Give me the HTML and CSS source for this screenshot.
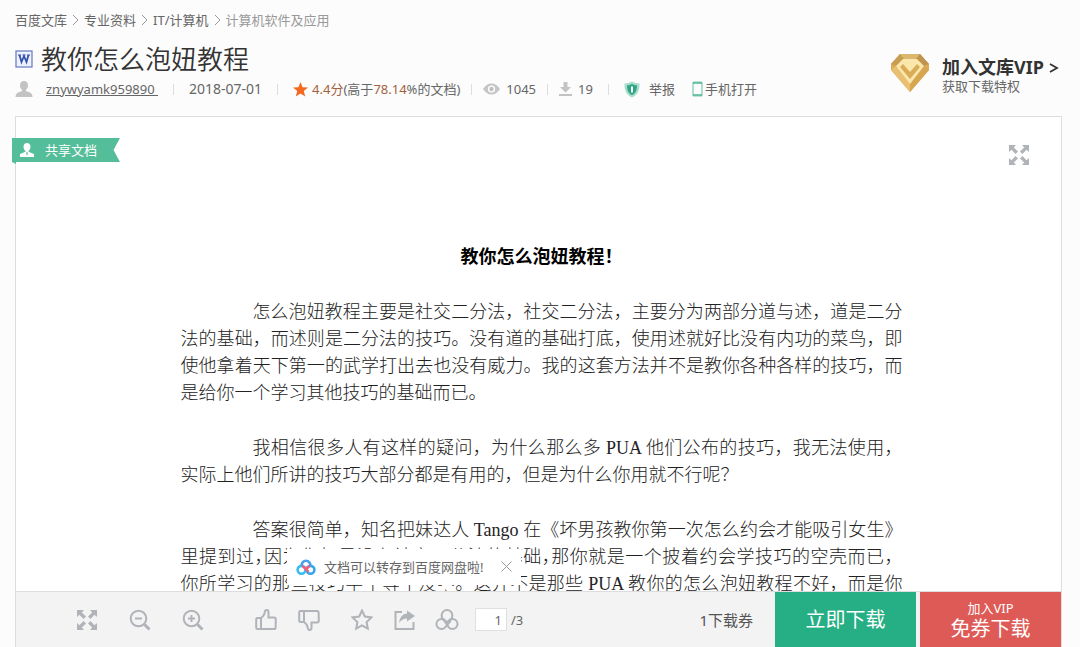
FILE: index.html
```html
<!DOCTYPE html>
<html lang="zh-CN">
<head>
    <meta charset="UTF-8">
    <meta name="viewport" content="width=device-width, initial-scale=1.0">
    <title>教你怎么泡妞教程</title>
    <link rel="stylesheet" href="styles.css">
</head>
<body>

<svg class="sprite" aria-hidden="true">
    <symbol id="expand" viewBox="0 0 22 22">
        <path d="M1 1h7L5.800 3.400 10 7.600 7.600 10 3.400 5.800 1 8zM21 1v7l-2.400-2.200L14.400 10 12 7.600l4.200-4.200L14 1zM1 21v-7l2.400 2.200L7.600 12l2.400 2.400-4.200 4.200L8 21zM21 21h-7l2.200-2.400-4.200-4.200 2.400-2.400 4.200 4.200L21 14z" fill="currentColor"/>
    </symbol>
</svg>

<header class="header">
    <nav class="crumbs">
        <a href="#">百度文库</a>
        <svg class="arrow" viewBox="0 0 7 12"><path d="M1 1l5 5-5 5"/></svg>
        <a href="#">专业资料</a>
        <svg class="arrow" viewBox="0 0 7 12"><path d="M1 1l5 5-5 5"/></svg>
        <a href="#">IT/计算机</a>
        <svg class="arrow" viewBox="0 0 7 12"><path d="M1 1l5 5-5 5"/></svg>
        <a href="#" class="current">计算机软件及应用</a>
    </nav>

    <div class="info">
        <div class="info-left">
            <div class="title">
                <svg width="18" height="18" viewBox="0 0 18 18">
                    <rect x="1" y="1" width="16" height="16" fill="#eef2fc" stroke="#6379bd" stroke-width="1.200"/>
                    <path d="M3 5h3M7.500 5h3M12 5h3" stroke="#3451ae" stroke-width="1.200"/>
                    <path d="M4.500 5l2 7L9 6l2.500 6 2-7" fill="none" stroke="#3451ae" stroke-width="1.800"/>
                </svg>
                <h1>教你怎么泡妞教程</h1>
            </div>
            <div class="meta">
                <svg class="user" width="18" height="16" viewBox="0 0 18 16">
                    <path d="M9 0c2.500 0 4 1.800 4 4.300 0 2-.8 3.700-2 4.500v1.400c3 .7 6.500 1.600 6.500 5.800H.5c0-4.200 3.500-5.100 6.500-5.800V8.800C5.800 8 5 6.300 5 4.300 5 1.800 6.500 0 9 0z" fill="#c3c3c3"/>
                </svg>
                <a href="#" class="author">znywyamk959890&nbsp;</a>
                <span class="sep"></span>
                <span class="num">2018-07-01</span>
                <span class="sep"></span>
                <svg class="star" width="15" height="15" viewBox="0 0 16 16">
                    <path d="M8 0l2.200 5.500 5.800.4-4.500 3.800L13 15.500 8 12.300 3 15.500l1.500-5.800L0 5.900l5.800-.4z" fill="#f4681f"/>
                </svg>
                <span><b>4.4分</b>(高于<b>78.14</b>%的文档)</span>
                <span class="sep small"></span>
                <svg class="eye" width="17" height="12" viewBox="0 0 17 12">
                    <path d="M0 6c2-3.500 5-5.500 8.500-5.500S15 2.500 17 6c-2 3.500-5 5.500-8.500 5.500S2 9.500 0 6z" fill="#c6c6c6"/>
                    <circle cx="8.500" cy="6" r="3.600" fill="#fff"/>
                    <circle cx="8.500" cy="6" r="2.200" fill="#c0c0c0"/>
                </svg>
                <span>1045</span>
                <span class="sep small"></span>
                <svg class="down" width="13" height="14" viewBox="0 0 13 14">
                    <path d="M4.500 0h4v5H12l-5.500 5.500L1 5h3.500zM0 12h13v2H0z" fill="#c3c3c3"/>
                </svg>
                <span>19</span>
                <span class="sep"></span>
                <a href="#" class="report">
                    <svg width="16" height="17" viewBox="0 0 16 17">
                        <path d="M8 .5c2.500 1.300 4.700 1.900 7.500 2 .3 7-2 11.500-7.500 14C2.500 14 .2 9.500.5 2.500 3.300 2.400 5.500 1.800 8 .5z" fill="#a9dccb"/>
                        <path d="M8 3c1.700.9 3.300 1.300 5 1.400 0 5-1.500 7.800-5 9.600-3.500-1.800-5-4.600-5-9.600 1.700-.1 3.300-.5 5-1.400z" fill="#2fa683"/>
                        <path d="M8 5.500v6" stroke="#fff" stroke-width="2"/>
                    </svg>
                    举报
                </a>
                <a href="#" class="phone">
                    <svg width="11" height="16" viewBox="0 0 11 16">
                        <rect x="1" y="1" width="9" height="14" rx="1" fill="none" stroke="#7dc9ae" stroke-width="1.200"/>
                        <path d="M1 2h9M1 14h9" stroke="#4fb592" stroke-width="1.600"/>
                    </svg>
                    手机打开
                </a>
            </div>
        </div>

        <a href="#" class="vip">
            <svg width="40" height="40" viewBox="0 0 40 40">
                <path d="M10 1h20l9 10v6L20 39 1 17v-6z" fill="#d9ab56"/>
                <path d="M10 1h20l-4 5H14z" fill="#dcb86c"/>
                <path d="M1 11l9-10 4 5-7 7z" fill="#c79d52"/>
                <path d="M39 11L30 1l-4 5 7 7z" fill="#c0944c"/>
                <path d="M1 17l5-4 14 18v8z" fill="#e9c071"/>
                <path d="M39 17l-5-4-14 18v8z" fill="#d7a650"/>
                <path d="M13 6h14l7 7-14 18L6 13z" fill="#fbe6ab"/>
                <path d="M10 14l3-3 7 8 7-8 3 3-10 12z" fill="#d9ad58"/>
            </svg>
            <span class="vip-text">
                <strong>加入文库VIP<svg width="10" height="12" viewBox="0 0 10 12"><path d="M1 2l7 4-7 4" fill="none" stroke="#333" stroke-width="1.800"/></svg></strong>
                <span>获取下载特权</span>
            </span>
        </a>
    </div>
</header>

<main class="reader">
    <div class="ribbon">
        <svg width="14" height="14" viewBox="0 0 14 14">
            <path d="M7 0c2.200 0 3.500 1.500 3.500 3.700C10.500 5.700 9.600 7 8.600 7.800v.9L14 11v3H0v-3l5.400-2.300v-.9C4.400 7 3.500 5.700 3.500 3.700 3.500 1.500 4.800 0 7 0z" fill="#fff"/>
            <path d="M6 9.500h2L7 13z" fill="#54bd99"/>
        </svg>
        共享文档
    </div>
    <button class="full" aria-label="全屏"><svg width="22" height="22"><use href="#expand"/></svg></button>

    <article class="doc">
        <h2>教你怎么泡妞教程！</h2>
        <p>怎么泡妞教程主要是社交二分法，社交二分法，主要分为两部分道与述，道是二分法的基础，而述则是二分法的技巧。没有道的基础打底，使用述就好比没有内功的菜鸟，即使他拿着天下第一的武学打出去也没有威力。我的这套方法并不是教你各种各样的技巧，而是给你一个学习其他技巧的基础而已。</p>
        <p>我相信很多人有这样的疑问，为什么那么多 PUA 他们公布的技巧，我无法使用，实际上他们所讲的技巧大部分都是有用的，但是为什么你用就不行呢？</p>
        <p class="last">答案很简单，知名把妹达人 Tango 在《坏男孩教你第一次怎么约会才能吸引女生》里提到过<i>，</i>因为你如果没有社交二分法的基础<i>，</i>那你就是一个披着约会学技巧的空壳而已，<br>你所学习的那些技巧学了等于没学。这并不是那些 PUA 教你的怎么泡妞教程不好，而是你</p>
    </article>
</main>

<footer class="toolbar">
    <div class="tools">
        <button aria-label="全屏"><svg width="22" height="22"><use href="#expand"/></svg></button>
        <button class="wide" aria-label="缩小">
            <svg class="line" width="22" height="22" viewBox="0 0 22 22"><circle cx="9.500" cy="9.500" r="7.800"/><path d="M6 9.500h7"/><path class="thick" d="M15.500 15.500l5 5"/></svg>
        </button>
        <button class="wide" aria-label="放大">
            <svg class="line" width="22" height="22" viewBox="0 0 22 22"><circle cx="9.500" cy="9.500" r="7.800"/><path d="M6 9.500h7M9.500 6v7"/><path class="thick" d="M15.500 15.500l5 5"/></svg>
        </button>
        <button class="group" aria-label="赞">
            <svg class="line" width="22" height="22" viewBox="0 0 22 22"><path d="M6 9H2.500Q1.200 9 1.200 10.300v8.400Q1.200 20 2.500 20H19q1.600 0 1.600-1.600l.2-8Q20.800 8.500 19 8.500h-5.500V3.200Q13.500 1 11.600 1 10 1 9.800 3 9.500 6.500 6 9zM6 9v11"/></svg>
        </button>
        <button class="near" aria-label="踩">
            <svg class="line" width="22" height="22" viewBox="0 0 22 22"><path d="M6 13H2.500Q1.200 13 1.200 11.700V3.300Q1.200 2 2.500 2H19q1.600 0 1.600 1.600l.2 8q0 1.900-1.800 1.900h-5.500v5.300q0 2.200-1.900 2.200-1.600 0-1.800-2Q9.500 15.500 6 13zM6 13V2"/></svg>
        </button>
        <button class="wide" aria-label="收藏">
            <svg class="line" width="22" height="22" viewBox="0 0 22 22"><path d="M11 1.500l2.800 6 6.700.9-4.900 4.600 1.200 6.700-5.800-3.300-5.800 3.300 1.200-6.700L1.500 8.400l6.700-.9z"/></svg>
        </button>
        <button class="near" aria-label="分享">
            <svg class="line" width="22" height="22" viewBox="0 0 22 22"><path d="M8 3H1.500v17h18v-7"/><path d="M13 1.500L21 7l-8 5.500V9.500q-5 0-8 4.500 1-9 8-9.500z" fill="#b0b3b8" stroke="none"/></svg>
        </button>
        <div class="netdisk">
            <button aria-label="转存到网盘">
                <svg class="line" width="24" height="22" viewBox="0 0 24 22"><path d="M8.200 10.300A5.400 5.400 0 1 1 15.800 10.300L12 13.500z"/><path d="M12 13.500l-1.800-1.800A5 5 0 1 0 10.200 18.300L15.800 11.700"/><path d="M12 13.500l1.800-1.800A5 5 0 1 1 13.800 18.300L8.200 10.300"/></svg>
            </button>
            <div class="tip">
                <svg width="20" height="16" viewBox="0 0 20 16" fill="none" stroke-width="2.600">
                    <circle cx="5.500" cy="10.800" r="3.900" stroke="#35bdf2"/>
                    <circle cx="14.500" cy="10.800" r="3.900" stroke="#35a4ee"/>
                    <path d="M5.800 7a4.300 4.300 0 1 1 8.400 0" stroke="#4aa0ec"/>
                    <path d="M6.500 7l3.500 3 3.500-3M10 10l2.500 3" stroke="#f0607c"/>
                </svg>
                <span>文档可以转存到百度网盘啦!</span>
                <button aria-label="关闭"><svg width="11" height="11" viewBox="0 0 11 11"><path d="M.5.5l10 10M10.500.5l-10 10" stroke="#999"/></svg></button>
            </div>
        </div>
        <label class="pages"><input type="text" value="1" aria-label="页码"><span>/3</span></label>
    </div>
    <span class="ticket">1下载券</span>
    <button class="btn green">立即下载</button>
    <button class="btn red"><small>加入VIP</small>免券下载</button>
</footer>

</body>
</html>
```
FILE: styles.css
```css
* {
    box-sizing: border-box;
}
body {
    display: flex;
    flex-direction: column;
    height: 100vh;
    margin: 0;
    padding: 0 18px 0 15px;
    overflow: hidden;
    background: #fcfcfc;
    color: #666;
    font-family: "Noto Sans", "Noto Sans CJK SC", sans-serif;
    font-size: 13px;
    line-height: 20px;
}
a {
    color: inherit;
    text-decoration: none;
}
svg {
    display: block;
    flex: none;
}
button {
    padding: 0;
    border: none;
    background: none;
    color: #b0b3b8;
    font-family: inherit;
    cursor: pointer;
}
.sprite {
    position: absolute;
    width: 0;
    height: 0;
}

/* header */
.header {
    flex: none;
    padding-top: 10px;
}
.crumbs {
    display: flex;
    align-items: center;
    gap: 5px;
}
.crumbs .current {
    color: #999;
}
.arrow {
    width: 7px;
    height: 12px;
    fill: none;
    stroke: #999;
}
.info {
    display: flex;
    justify-content: space-between;
    align-items: center;
    height: 86px;
    padding-bottom: 4px;
}
.title {
    display: flex;
    align-items: center;
    gap: 8px;
    height: 36px;
}
h1 {
    margin: 0;
    color: #333;
    font-size: 26px;
    font-weight: 350;
    line-height: 36px;
}
.meta {
    display: flex;
    align-items: center;
    height: 24px;
    white-space: nowrap;
}
.meta b {
    color: #a5603d;
    font-weight: normal;
}
.meta .num {
    font-size: 14px;
}
.user {
    margin-right: 13px;
}
.author {
    text-decoration: underline;
}
.sep {
    width: 1px;
    height: 11px;
    margin: 0 15px;
    background: #ddd;
}
.sep.small {
    margin: 0 11px;
}
.star {
    margin-right: 4px;
}
.eye,
.down {
    margin-right: 6px;
}
.report,
.phone {
    display: flex;
    align-items: center;
}
.report {
    gap: 9px;
    margin-right: 17px;
}
.phone {
    gap: 2px;
}
.vip {
    display: flex;
    align-items: center;
    gap: 12px;
    margin: 4px 3px 0 0;
}
.vip-text {
    display: flex;
    flex-direction: column;
    padding-top: 8px;
    line-height: 19px;
}
.vip strong {
    display: flex;
    align-items: center;
    gap: 5px;
    color: #333;
    font-size: 18px;
}

/* document */
.reader {
    position: relative;
    flex: 1;
    min-height: 0;
    border: 1px solid #ddd;
    border-bottom: none;
    background: #fff;
}
.ribbon {
    position: absolute;
    top: 21px;
    left: -4px;
    display: flex;
    align-items: center;
    gap: 11px;
    width: 108px;
    height: 26px;
    padding: 0 0 2px 8px;
    background: #54bd99;
    clip-path: polygon(0 0, 100% 0, 94% 12px, 100% 24px, 4px 24px, 4px 100%, 0 24px);
    color: #fff;
}
.full {
    position: absolute;
    top: 27px;
    right: 31px;
}
.doc {
    max-width: 728px;
    height: 100%;
    margin: 0 auto;
    padding: 127px 0 0 6px;
    overflow: hidden;
    color: #222;
    font-family: "Liberation Serif", "Noto Sans CJK SC", serif;
    font-size: 18px;
    font-weight: 300;
    line-height: 27px;
}
.doc h2 {
    margin: 0 0 28px;
    color: #000;
    font-size: 18px;
    text-align: center;
}
.doc p {
    margin: 0 0 28px;
    text-align: justify;
    text-indent: 4em;
}
.doc .last {
    margin: 0;
    text-align-last: justify;
}
.doc i {
    font-style: normal;
    font-feature-settings: "halt";
}

/* bottom toolbar */
.toolbar {
    display: flex;
    flex: none;
    align-items: center;
    height: 56px;
    border: 1px solid #ddd;
    border-width: 1px 1px 0;
    background: #f3f3f3;
}
.tools {
    display: flex;
    flex: 1;
    align-items: center;
    padding-left: 60px;
}
.line {
    fill: none;
    stroke: #b0b3b8;
    stroke-width: 2;
}
.line .thick {
    stroke-width: 3;
}
.tools .wide {
    margin-left: 31px;
}
.tools .group {
    margin-left: 51px;
}
.tools .near {
    margin-left: 21px;
}
.netdisk {
    position: relative;
    display: flex;
    margin-left: 19px;
}
.tip {
    position: absolute;
    bottom: 46px;
    left: -148px;
    display: flex;
    align-items: center;
    width: 234px;
    height: 36px;
    padding: 0 9px;
    background: #fff;
    white-space: nowrap;
}
.tip::after {
    content: "";
    position: absolute;
    bottom: -4px;
    left: 156px;
    width: 8px;
    height: 8px;
    background: #fff;
    transform: rotate(45deg);
}
.tip span {
    flex: 1;
    margin-left: 8px;
}
.pages {
    display: flex;
    align-items: center;
    gap: 4px;
    margin-left: 16px;
}
.pages input {
    width: 32px;
    height: 23px;
    padding: 0 4px;
    border: 1px solid #e0e0e0;
    background: #fff;
    color: #666;
    font: inherit;
    text-align: right;
}
.ticket {
    margin-right: 22px;
    color: #555;
    font-size: 15px;
}
.btn {
    display: flex;
    flex-direction: column;
    align-items: center;
    justify-content: center;
    width: 141px;
    height: 55px;
    color: #fff;
    font-size: 20px;
    line-height: 24px;
}
.green {
    margin-right: 4px;
    background: #26ae84;
}
.red {
    background: #de5a56;
}
.red small {
    font-size: 13px;
    line-height: 18px;
}
```
